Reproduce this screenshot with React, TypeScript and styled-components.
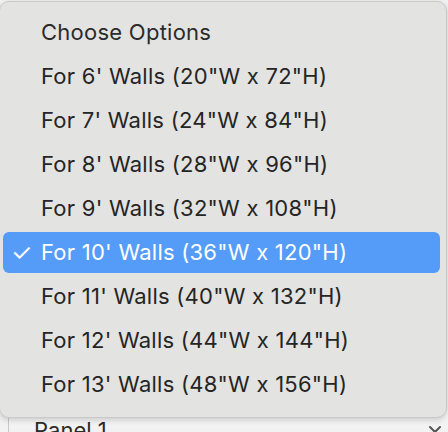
import React from "react";
import styled, { createGlobalStyle } from "styled-components";

const Global = createGlobalStyle`
  html, body { margin: 0; padding: 0; }
  body {
    width: 448px;
    height: 432px;
    overflow: hidden;
    background: #f2f2f2;
    font-family: Inter, "Noto Sans", "Liberation Sans", sans-serif;
  }
`;

const Page = styled.div`
  position: relative;
  width: 448px;
  height: 432px;
  overflow: hidden;
  display: flex;
  flex-direction: column;
  justify-content: space-between;
`;

const BackLine = styled.div`
  margin-top: -20px;
  padding-left: 8px;
  display: flex;
  gap: 40px;
  font-size: 22px;
  line-height: 22px;
  color: #333;
`;

const SelectBox = styled.div`
  margin-left: 8px;
  margin-bottom: -18px;
  height: 40px;
  border-left: 1px solid #c8c8c8;
  background: linear-gradient(#f7f7f7, #ededed);
  display: flex;
  align-items: center;
  justify-content: space-between;
  padding: 0 6px 0 25px;
  font-size: 22px;
  color: #2a2a2a;
`;

const Menu = styled.div`
  position: absolute;
  top: 1px;
  left: -1px;
  right: 1px;
  height: 417px;
  box-sizing: border-box;
  background: #e3e3e2;
  border: 1px solid #c9c9c9;
  border-radius: 10px;
  box-shadow: 0 2px 6px rgba(0, 0, 0, 0.18);
  padding-top: 8px;
  display: flex;
  flex-direction: column;
  letter-spacing: 0.25px;
`;

const Title = styled.div`
  height: 44px;
  display: flex;
  align-items: center;
  padding-left: 41px;
  font-size: 22px;
  color: #2b2b2b;
`;

const Row = styled.div`
  height: 44px;
  display: flex;
  align-items: center;
`;

const RowInner = styled.div<{ $active?: boolean }>`
  flex: 1;
  height: 41px;
  margin: 0 6px 0 3px;
  border-radius: 6px;
  display: flex;
  align-items: center;
  font-size: 22px;
  color: ${(p) => (p.$active ? "#ffffff" : "#252525")};
  background: ${(p) => (p.$active ? "#559cf9" : "transparent")};
`;

const Check = styled.span`
  width: 38px;
  padding-left: 8px;
  box-sizing: border-box;
  font-size: 24px;
  font-weight: 400;
`;

const Chevron = () => (
  <svg width="14" height="10" viewBox="0 0 14 10">
    <path d="M2 2 L7 7 L12 2" fill="none" stroke="#555" strokeWidth="2" strokeLinecap="round" strokeLinejoin="round" />
  </svg>
);

const options = [
  `For 6' Walls (20"W x 72"H)`,
  `For 7' Walls (24"W x 84"H)`,
  `For 8' Walls (28"W x 96"H)`,
  `For 9' Walls (32"W x 108"H)`,
  `For 10' Walls (36"W x 120"H)`,
  `For 11' Walls (40"W x 132"H)`,
  `For 12' Walls (44"W x 144"H)`,
  `For 13' Walls (48"W x 156"H)`,
];

export default function App() {
  return (
    <>
      <Global />
      <Page>
        <BackLine>
          <span>Material Finish</span>
          <span>PN - Free Knowhow</span>
        </BackLine>
        <SelectBox>
          <span>Panel 1</span>
          <Chevron />
        </SelectBox>
        <Menu>
          <Title>Choose Options</Title>
          {options.map((o, i) => {
            const active = i === 4;
            return (
              <Row key={o}>
                <RowInner $active={active}>
                  <Check>{active ? "✓" : ""}</Check>
                  {o}
                </RowInner>
              </Row>
            );
          })}
        </Menu>
      </Page>
    </>
  );
}
